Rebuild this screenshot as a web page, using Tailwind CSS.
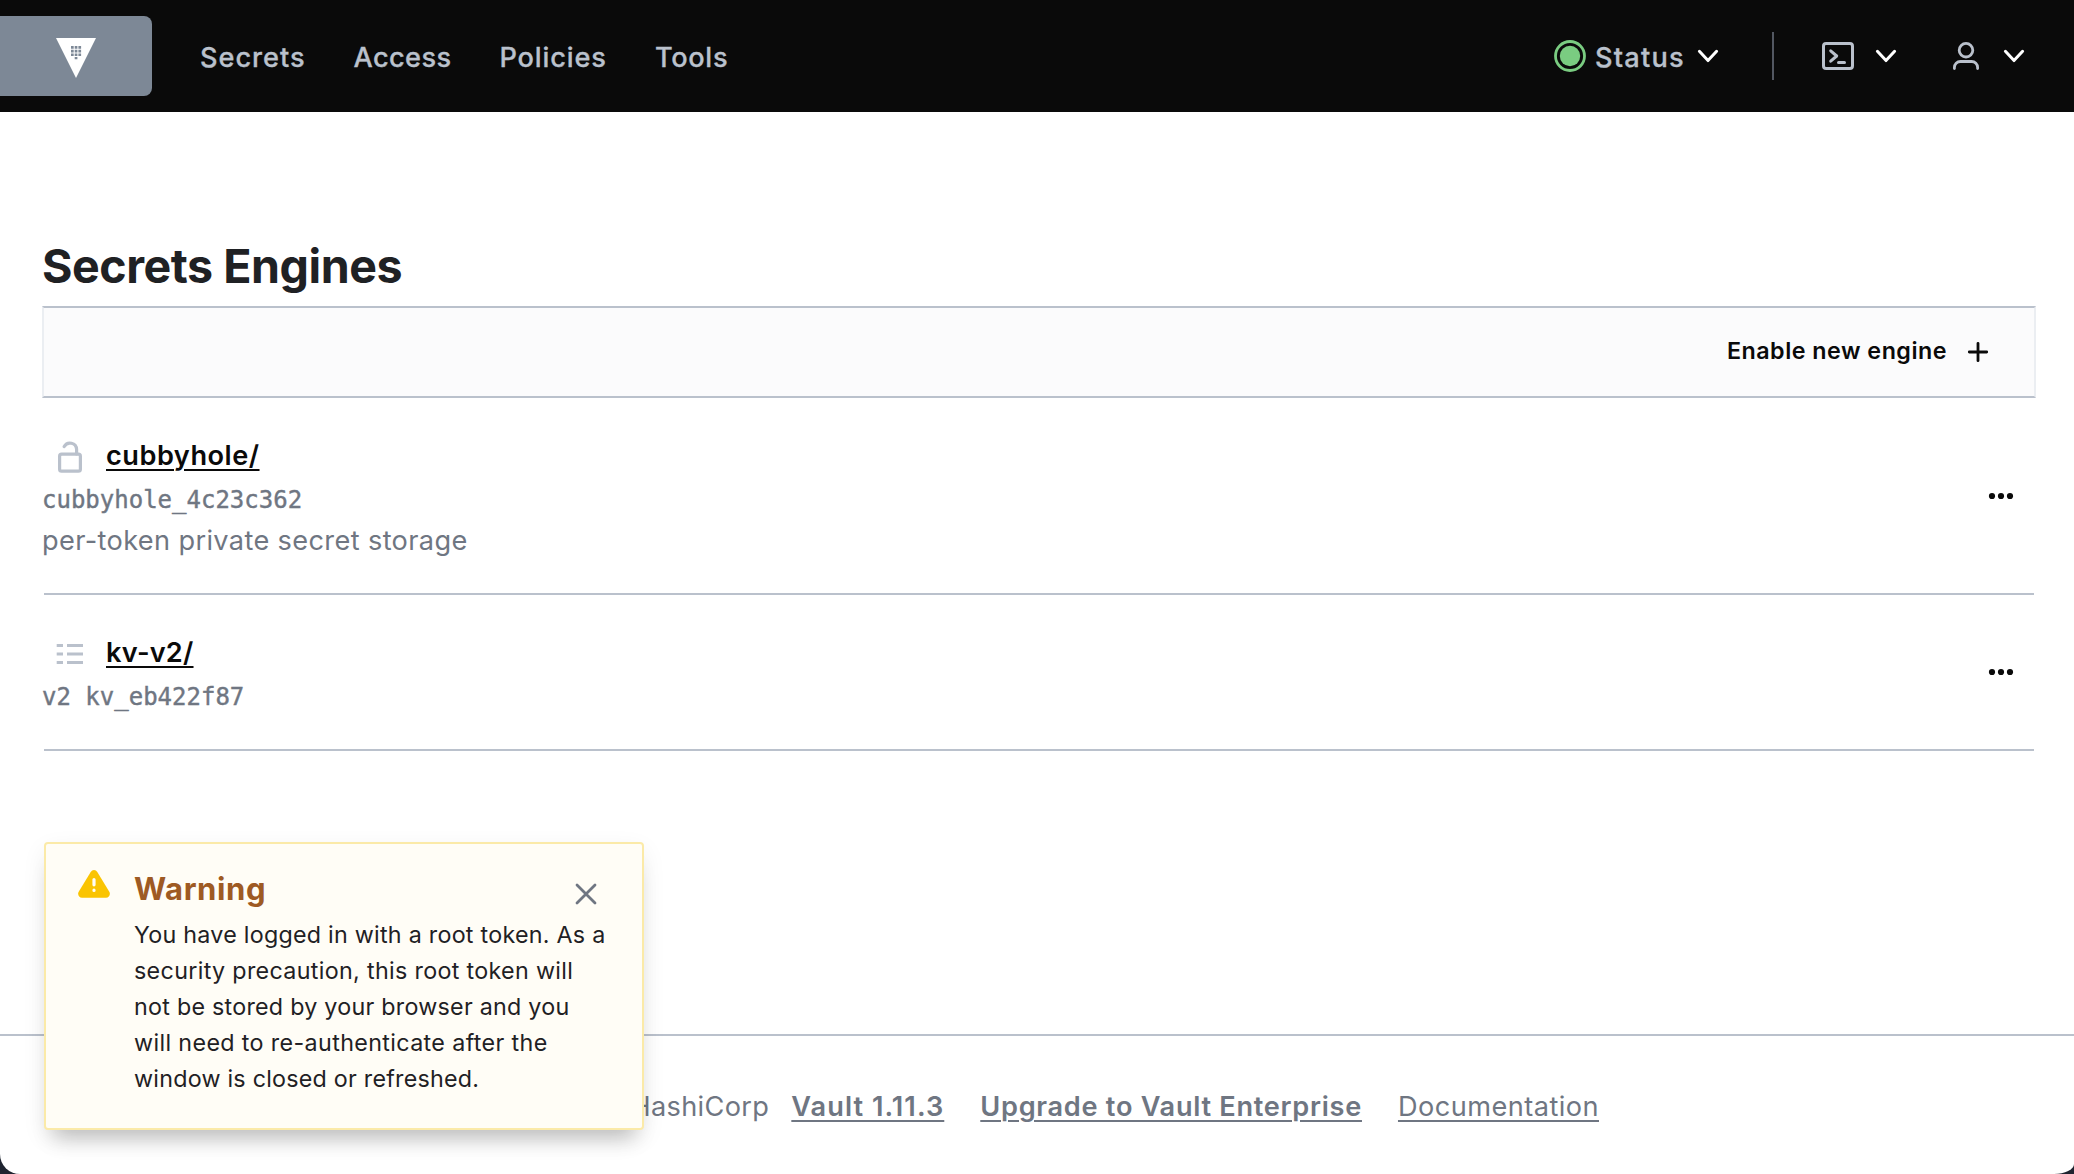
<!DOCTYPE html>
<html lang="en">
<head>
<meta charset="utf-8">
<title>Vault</title>
<script src="https://cdn.jsdelivr.net/npm/@tailwindcss/browser@4"></script>
</head>
<body class="bg-[#1f2430] font-['Inter',sans-serif] text-[#1f2124]">
<div class="relative flex h-[1174px] w-[2074px] flex-col overflow-hidden rounded-bl-[20px] rounded-br-[20px_10px] bg-white">
  <header class="flex h-[112px] shrink-0 items-center bg-[#0a0a0a] text-[27.16px] font-medium text-[#bac1cc]">
    <a class="flex h-20 w-[152px] items-center justify-center rounded-r-lg bg-[#7d8896]">
      <svg class="mt-[3px]" width="40" height="40" viewBox="0 0 40 40">
        <path fill="#fff" d="M0 0h40L20 40z"/>
        <path fill="#7d8896" d="M15 8h2.7v2.7H15zM18.7 8h2.7v2.7h-2.7zM22.4 8h2.7v2.7h-2.7zM15 11.7h2.7v2.7H15zM18.7 11.7h2.7v2.7h-2.7zM22.4 11.7h2.7v2.7h-2.7zM15 15.4h2.7v2.7H15zM18.7 15.4h2.7v2.7h-2.7zM22.4 15.4h2.7v2.7h-2.7zM18.7 19.1h2.7v2.2h-2.7z"/>
      </svg>
    </a>
    <nav class="ml-12 flex gap-12 pt-1 [-webkit-text-stroke:0.3px]">
      <a class="tracking-[0.98px]">Secrets</a>
      <a class="tracking-[0.37px]">Access</a>
      <a class="tracking-[0.88px]">Policies</a>
      <a class="tracking-[0.69px]">Tools</a>
    </nav>
    <div class="ml-auto flex items-center pr-[49px]">
      <svg width="32" height="32" viewBox="0 0 32 32"><circle cx="16" cy="16" r="14.5" fill="none" stroke="#7acc81" stroke-width="2.8"/><circle cx="16" cy="16" r="10.2" fill="#7acc81"/></svg>
      <span class="ml-[9px] w-[89px] pt-1 tracking-[1.2px] [-webkit-text-stroke:0.3px]">Status</span>
      <svg class="ml-[13px]" width="22" height="14" viewBox="0 0 22 14" fill="none" stroke="#fff" stroke-width="3" stroke-linecap="round" stroke-linejoin="round"><path d="M2.4 2.3 11 11.6l8.6-9.3"/></svg>
      <span class="ml-[53px] h-12 w-0.5 bg-[#525761]"></span>
      <svg class="ml-12" width="32" height="28" viewBox="0 0 32 28" fill="none" stroke="#bac1cc" stroke-width="3" stroke-linejoin="round"><rect x="1.5" y="1.5" width="29" height="25" rx="2.6"/><path stroke-linecap="round" d="m8.7 8.8 6 5.2-6 5.2M16.500 20.500h6"/></svg>
      <svg class="ml-[21px]" width="22" height="14" viewBox="0 0 22 14" fill="none" stroke="#fff" stroke-width="3" stroke-linecap="round" stroke-linejoin="round"><path d="M2.4 2.3 11 11.6l8.6-9.3"/></svg>
      <svg class="ml-14" width="26" height="28" viewBox="0 0 26 28" fill="none" stroke="#bac1cc" stroke-width="2.8"><ellipse cx="13" cy="8.2" rx="6.8" ry="6.8"/><path stroke-linecap="round" d="M1.400 26.600v-1.100a6 6 0 0 1 6-6h11.200a6 6 0 0 1 6 6v1.100"/></svg>
      <svg class="ml-6" width="22" height="14" viewBox="0 0 22 14" fill="none" stroke="#fff" stroke-width="3" stroke-linecap="round" stroke-linejoin="round"><path d="M2.4 2.3 11 11.6l8.6-9.3"/></svg>
    </div>
  </header>

  <main class="flex-1 pl-[42px] pr-[38px] pt-[126px]">
    <h1 class="text-[46.56px] font-bold leading-[56px] tracking-[-0.46px]">Secrets Engines</h1>
    <div class="mt-3 flex h-[92px] items-center justify-end border-2 border-x-[#ebeef2] border-y-[#bac1cc] bg-[#fbfbfc] pr-[45px] text-[#0a0a0a]">
      <span class="pb-px text-[23.28px] font-semibold tracking-[0.5px]">Enable new engine</span>
      <svg class="ml-[20px]" width="22" height="22" viewBox="0 0 22 22" fill="none" stroke="#0a0a0a" stroke-width="2.8" stroke-linecap="round"><path d="M11 2.300v17.400M2.300 11h17.400"/></svg>
    </div>

    <section class="flex h-[195px] items-center justify-between pr-[21px]">
      <div class="h-full pt-9">
        <div class="flex h-[42px] items-center">
          <svg class="ml-4 mt-1" width="24" height="32" viewBox="0 0 24 32" fill="none" stroke="#bac1cc" stroke-width="3.2"><rect x="1.600" y="13.200" width="20.800" height="17" rx="2"/><path stroke-linecap="round" d="M18.600 13V8.400A6.600 6.600 0 0 0 6.200 5.600"/></svg>
          <a class="ml-6 pt-0.5 text-[27.16px] font-semibold tracking-[0.5px] text-[#0a0a0a] underline decoration-2 underline-offset-4">cubbyhole/</a>
        </div>
        <div class="h-12 text-2xl leading-[48px] text-[#6f7682]"><code class="font-['DejaVu_Sans_Mono',monospace] [-webkit-text-stroke:0.4px]">cubbyhole_4c23c362</code></div>
        <p class="pt-px text-[27.16px] leading-8 tracking-[0.36px] text-[#6f7682]">per-token private secret storage</p>
      </div>
      <svg width="28" height="8" viewBox="0 0 28 8" fill="#0a0a0a"><circle cx="5" cy="4" r="3.100"/><circle cx="14" cy="4" r="3.100"/><circle cx="23" cy="4" r="3.100"/></svg>
    </section>
    <hr class="mx-0.5 border-t-2 border-[#bac1cc]">
    <section class="flex h-[154px] items-center justify-between pr-[21px]">
      <div class="h-full pt-9">
        <div class="flex h-[42px] items-center">
          <svg class="ml-[14px] mt-1" width="28" height="22" viewBox="0 0 28 22" fill="none" stroke="#bac1cc" stroke-width="3.2"><path d="M.7 2.500H7M11 2.500h16M.7 11H7M11 11h16M.7 19.500H7M11 19.500h16"/></svg>
          <a class="ml-[22px] pt-0.5 text-[27.16px] font-semibold tracking-[0.21px] text-[#0a0a0a] underline decoration-2 underline-offset-4">kv-v2/</a>
        </div>
        <div class="h-12 text-2xl leading-[47px] text-[#6f7682]"><code class="font-['DejaVu_Sans_Mono',monospace] [-webkit-text-stroke:0.4px]">v2 kv_eb422f87</code></div>
      </div>
      <svg width="28" height="8" viewBox="0 0 28 8" fill="#0a0a0a"><circle cx="5" cy="4" r="3.100"/><circle cx="14" cy="4" r="3.100"/><circle cx="23" cy="4" r="3.100"/></svg>
    </section>
    <hr class="mx-0.5 border-t-2 border-[#bac1cc]">
  </main>

  <footer class="flex h-[140px] shrink-0 items-center justify-end border-t-2 border-[#bac1cc] pr-[475px] pt-1 text-[27.16px] text-[#6f7682]">
    <span class="mr-[22px] tracking-[0.35px]">© 2022 HashiCorp</span>
    <a class="mr-9 font-semibold tracking-[1.05px] underline decoration-2 underline-offset-4">Vault 1.11.3</a>
    <a class="mr-9 font-semibold tracking-[0.71px] underline decoration-2 underline-offset-4">Upgrade to Vault Enterprise</a>
    <a class="tracking-[0.45px] underline decoration-2 underline-offset-4">Documentation</a>
  </footer>

  <aside class="absolute left-[44px] top-[842px] flex h-[288px] w-[600px] rounded border-2 border-[#fbeaa8] bg-[#fffdf6] shadow-[0_18px_20px_-10px_rgba(0,0,0,0.22),0_8px_24px_rgba(0,0,0,0.07)]">
    <svg class="ml-8 mt-[26px] shrink-0" width="32" height="28" viewBox="0 0 32 28"><path fill="#fac402" d="M12.700 1.900a3.900 3.900 0 0 1 6.600 0l12 19.800c1.600 2.700-.3 6.100-3.300 6.100H4c-3 0-4.900-3.400-3.300-6.100z"/><path stroke="#fffdf6" stroke-width="3.200" stroke-linecap="round" d="M16 9.600v5.200M16 20.200v.2"/></svg>
    <div class="ml-6 pt-[25px]">
      <h2 class="text-[31.04px] font-bold leading-[40px] tracking-[0.6px] text-[#9e5a23]">Warning</h2>
      <p class="mt-[7.5px] whitespace-nowrap text-[23.28px] leading-9 tracking-[0.33px]"><span class="tracking-[0.26px]">You have logged in with a root token. As a</span><br>security precaution, this root token will<br><span class="tracking-[0.26px]">not be stored by your browser and you</span><br><span class="tracking-[0.37px]">will need to re-authenticate after the</span><br><span class="tracking-[0.24px]">window is closed or refreshed.</span></p>
    </div>
    <svg class="absolute left-[529px] top-[39px]" width="22" height="22" viewBox="0 0 22 22" fill="none" stroke="#6f7682" stroke-width="2.8" stroke-linecap="round"><path d="m2 2 18 18M20 2 2 20"/></svg>
  </aside>
</div>
</body>
</html>
